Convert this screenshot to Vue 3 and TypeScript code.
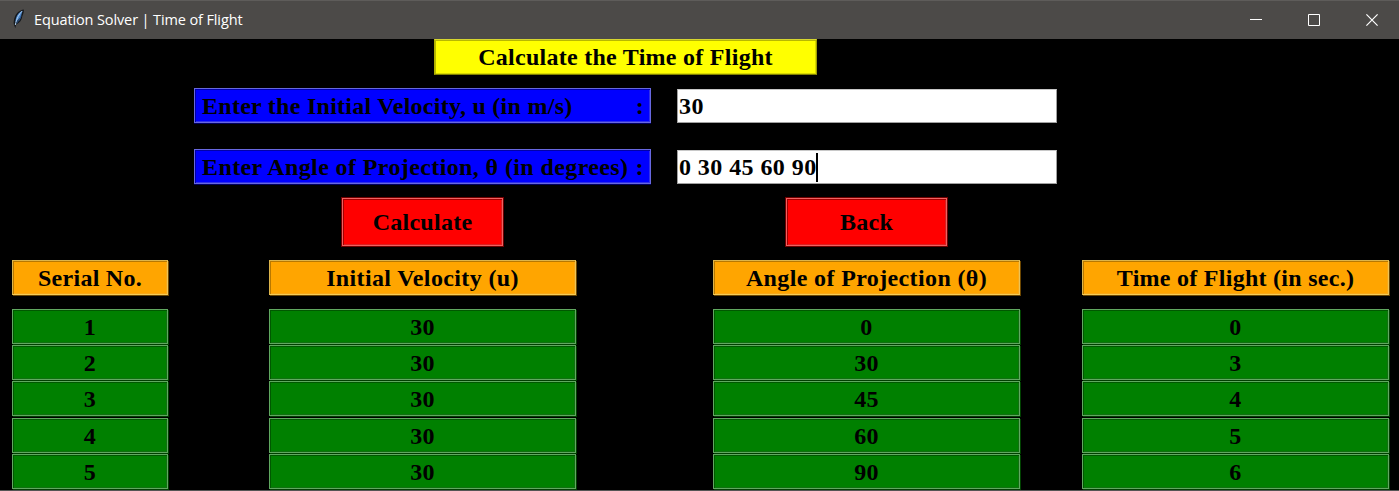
<script setup lang="ts">
const velocity = '30'
const angles = '0 30 45 60 90'

const columns: { title: string; kind: string; values: string[] }[] = [
  { title: 'Serial No.', kind: 'serial', values: ['1', '2', '3', '4', '5'] },
  { title: 'Initial Velocity (u)', kind: 'velocity', values: ['30', '30', '30', '30', '30'] },
  { title: 'Angle of Projection (θ)', kind: 'angle', values: ['0', '30', '45', '60', '90'] },
  { title: 'Time of Flight (in sec.)', kind: 'time', values: ['0', '3', '4', '5', '6'] },
]
</script>

<template>
  <div class="window">
    <header class="titlebar">
      <svg class="feather" width="12" height="20" viewBox="0 0 12 20">
        <path d="M11.800 .4C7.500 1 4 4 2.600 8.600c-.8 2.400-1.100 4.600-.8 6.600l1.500 4 .8-3.800C7.800 14 10 10.700 10.300 7.200c1-1.800 1.700-4.400 1.500-6.800z" fill="#15181c" />
        <path d="M10.500 1.800C7.800 3 5.200 5.300 4.200 8.500c-.5 1.500-.8 3.100-.8 4.700C6.500 11 8.500 8.200 9.200 6.200z" fill="#4a86cc" />
        <path d="M10 2.200C7.300 5 4.700 9 3.300 16" fill="none" stroke="#b4d2ee" stroke-width="1" />
        <path d="M9 6.600C8.600 9.500 6.900 12 4.300 14.200" fill="none" stroke="#2d5f9f" stroke-width="1" />
      </svg>
      <span class="caption">Equation Solver | Time of Flight</span>
      <div class="controls">
        <svg width="12" height="12" viewBox="0 0 12 12"><path d="M0 5.500h12" stroke="#fff" /></svg>
        <svg width="12" height="12" viewBox="0 0 12 12"><path d="M.5 .5h11v11H.5z" fill="none" stroke="#fff" /></svg>
        <svg width="12" height="12" viewBox="0 0 12 12"><path d="M.4 .4l11.200 11.200M11.600 .4L.4 11.600" stroke="#fff" stroke-width="1.200" /></svg>
      </div>
    </header>

    <main class="body">
      <h1 class="box heading"><span>Calculate the Time of Flight</span></h1>

      <div class="field">
        <label class="box label"><span>Enter the Initial Velocity, u (in m/s)</span><span>:</span></label>
        <div class="entry"><span>{{ velocity }}</span></div>
      </div>
      <div class="field second">
        <label class="box label"><span>Enter Angle of Projection, θ (in degrees)</span><span>:</span></label>
        <div class="entry"><span>{{ angles }}</span><i class="caret"></i></div>
      </div>

      <div class="actions">
        <button class="box action"><span>Calculate</span></button>
        <button class="box action"><span>Back</span></button>
      </div>

      <div class="table">
        <section v-for="c in columns" :key="c.kind" class="column">
          <div class="box head" :class="c.kind"><span>{{ c.title }}</span></div>
          <div class="cells">
            <div v-for="(v, i) in c.values" :key="i" class="box cell">{{ v }}</div>
          </div>
        </section>
      </div>
    </main>
  </div>
</template>

<style>
body { margin: 0; background: #000; overflow: hidden; }
</style>

<style scoped>
* { box-sizing: border-box; }
.window {
  width: 1399px;
  height: 491px;
  background: #000;
  border-bottom: 1px solid #555;
  overflow: hidden;
  font: bold 24px "Liberation Serif", serif;
  color: #000;
}
.titlebar {
  height: 39px;
  display: flex;
  align-items: center;
  background: #4c4a48;
  border-top: 1px solid #5e5c5a;
  padding: 0 21px 0 12px;
  color: #fff;
}
.feather { margin-top: -2px; }
.caption {
  margin: -2px 0 0 10px;
  font: 14.500px "Open Sans", "Noto Sans", sans-serif;
  letter-spacing: -.12px;
  white-space: nowrap;
}
.controls { margin-left: auto; display: flex; gap: 46px; }
.controls svg { display: block; }
.body { display: flex; flex-direction: column; }
.box {
  display: flex;
  align-items: center;
  justify-content: center;
  white-space: nowrap;
  margin: 0;
  font: inherit;
  color: #000;
  letter-spacing: .27px;
  border: 1px solid;
}
.heading {
  width: 383px;
  height: 36px;
  margin-left: 434px;
  background: #ff0;
  border-color: #d6d630 #a0a000 #808000 #b0b000;
  box-shadow: inset 1px 1px #b8b800, inset -1px -1px #d8d800;
}
.field { display: flex; margin-top: 13px; gap: 26px; padding-left: 194px; }
.field.second { margin-top: 26px; }
.label {
  width: 457px;
  height: 35px;
  justify-content: space-between;
  padding: 2px 6px 0 7px;
  background: #00f;
  border-color: #6868e0;
  box-shadow: inset 1px 1px #0000a8, inset -1px -1px #3030e8, 0 1px #000060;
}
.field.second .label { letter-spacing: .39px; }
.entry {
  width: 380px;
  height: 34px;
  margin-top: 1px;
  display: flex;
  align-items: center;
  padding-left: 1px;
  background: #fff;
  border: 1px solid #a0a0a0;
  border-top-color: #c8c8c8;
  letter-spacing: .43px;
}
.caret { width: 2px; height: 29px; background: #000; margin-left: -1px; }
.actions { display: flex; margin-top: 14px; padding-left: 342px; gap: 283px; }
.action {
  width: 161px;
  height: 48px;
  padding: 0;
  background: #f00;
  border-color: #f06060;
  box-shadow: inset 1px 1px #a00000, inset -1px -1px #d82020, 0 0 0 1px #700000;
}
.table {
  display: grid;
  grid-template-columns: 156px 101px 307px 137px 307px 62px 307px;
  padding-left: 12px;
  margin-top: 14px;
}
.column:nth-child(1) { grid-column: 1; }
.column:nth-child(2) { grid-column: 3; }
.column:nth-child(3) { grid-column: 5; }
.column:nth-child(4) { grid-column: 7; }
.head {
  height: 35px;
  padding-top: 1px;
  background: #ffa500;
  border-color: #dcb44c #ecc458 #f4cc58 #dcb44c;
  box-shadow: inset 1px 1px #b87800, inset -1px -1px #f8a818, 1px 1px #6c4600;
}
.head.velocity, .head.angle { letter-spacing: .37px; }
.cells {
  display: grid;
  grid-template-rows: 36px 36px 37px 36px 35px;
  margin-top: 14px;
}
.cell {
  height: 35px;
  padding-top: 2px;
  background: #008000;
  border-color: #60a860;
  box-shadow: inset 1px 1px #005800, inset -1px -1px #107010, 1px 1px #004000;
}
</style>
